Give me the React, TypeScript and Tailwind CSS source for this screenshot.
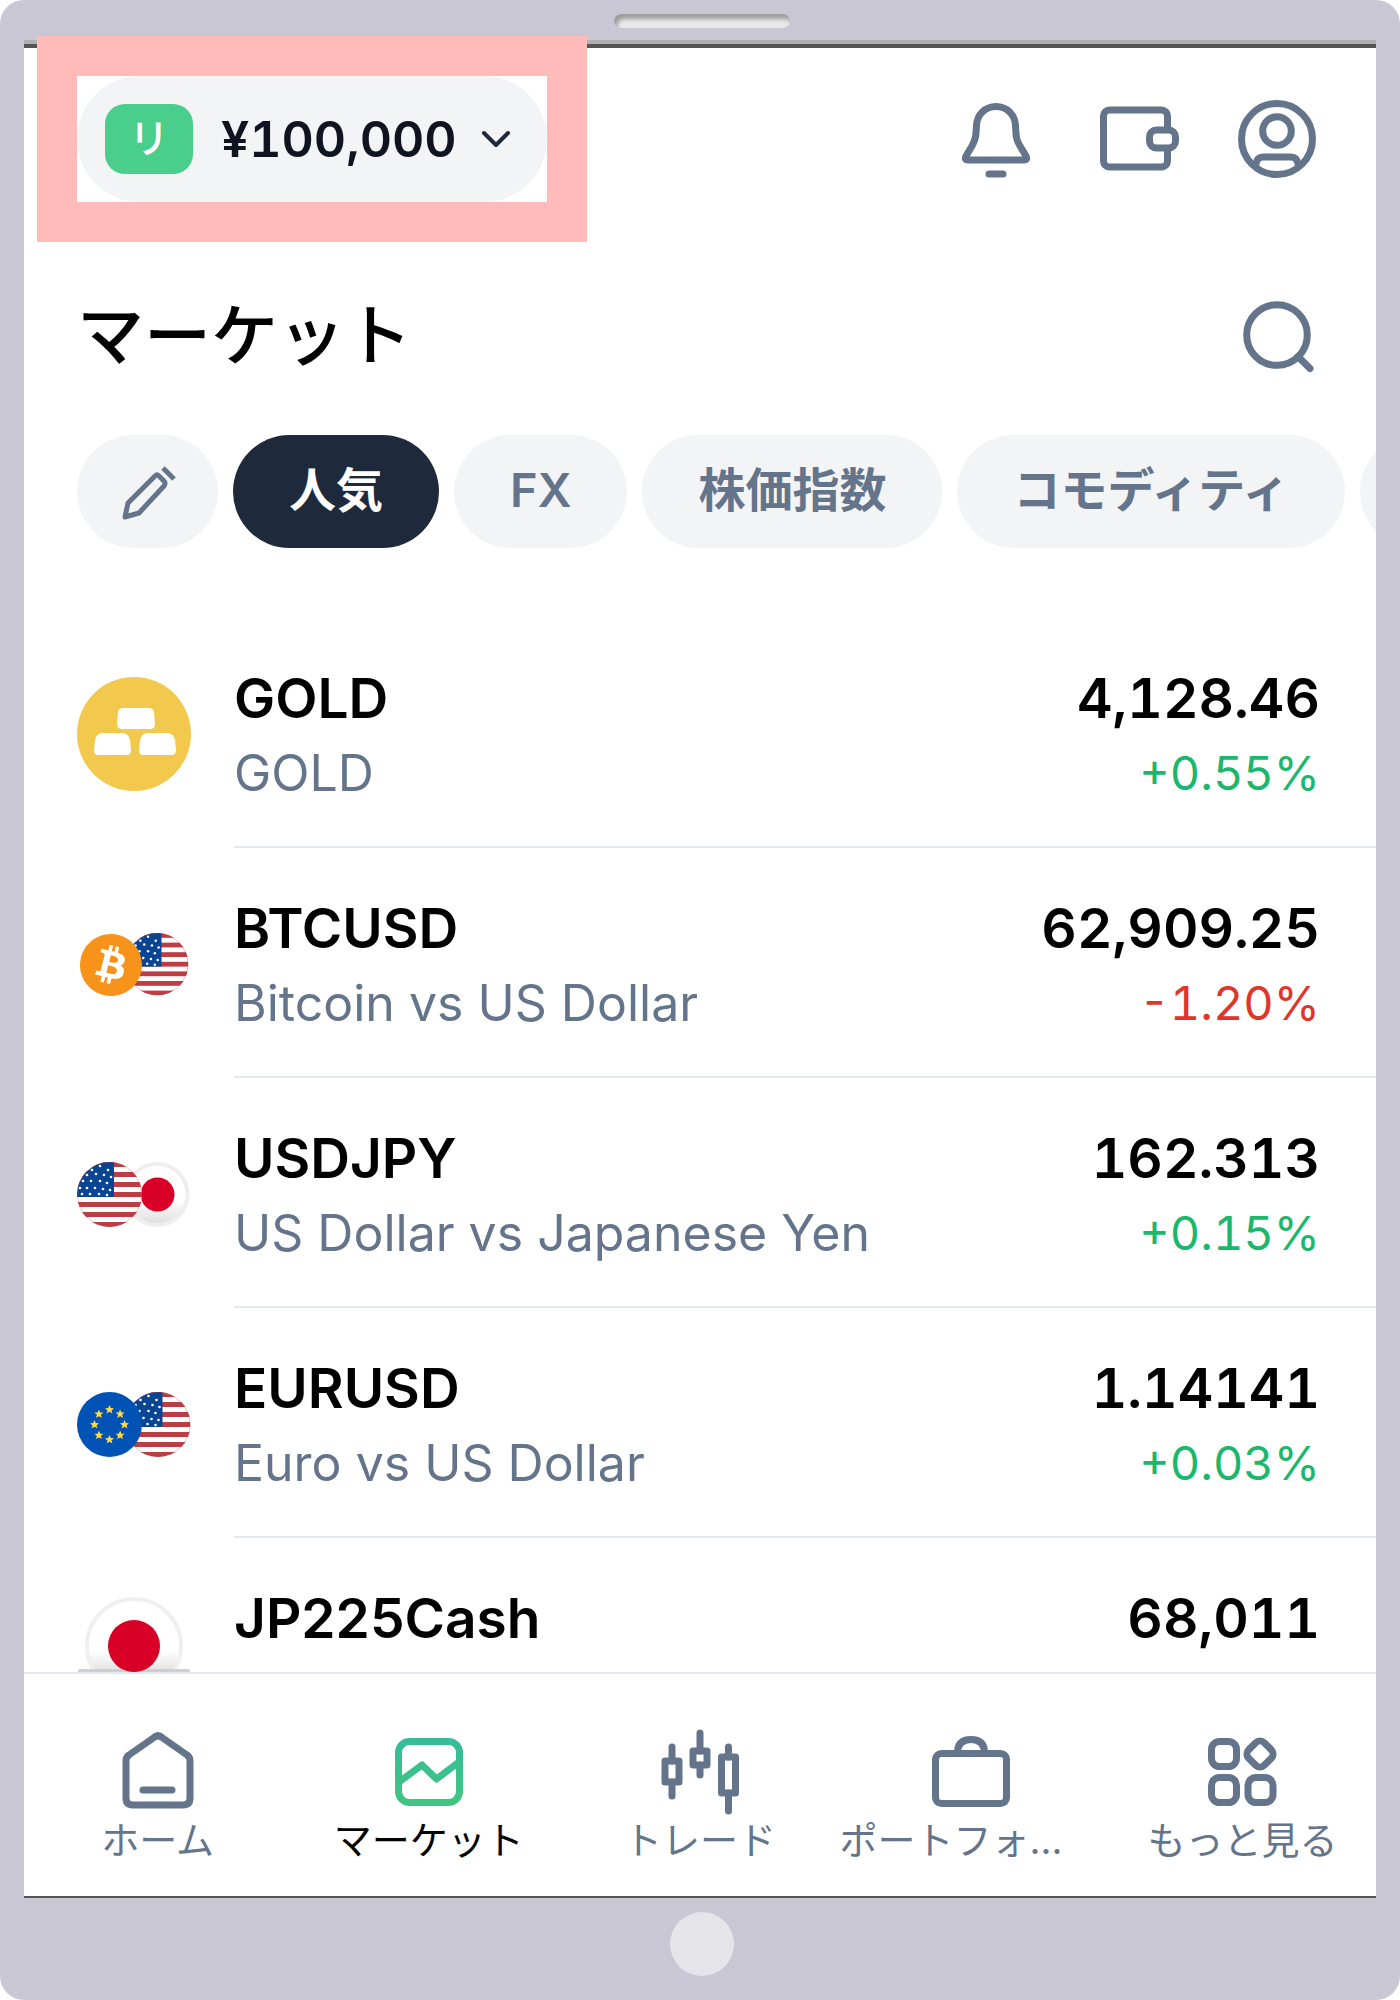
import { useState } from "react";
import type { ReactNode } from "react";
import { SiBitcoin } from "react-icons/si";

const tabs = ["人気", "FX", "株価指数", "コモディティ"];

// x, y of the small white stars on the blue field of the US flag
const stars = [
  [15, 8], [23, 4], [31, 8], [10, 13], [19, 12], [27, 13], [34, 15],
  [6, 19], [14, 19], [23, 19], [30, 21], [3, 26], [10, 26], [18, 26],
  [26, 27], [33, 28], [5, 32], [13, 32], [22, 32], [30, 33],
];

const Icon = ({ children, gradient }: { children: ReactNode; gradient?: boolean }) => (
  <svg
    viewBox="0 0 86 86"
    className="w-[86px] h-[86px] shrink-0"
    fill="none"
    stroke={gradient ? "url(#marketGradient)" : "currentColor"}
    strokeWidth={7}
    strokeLinecap="round"
    strokeLinejoin="round"
    aria-hidden="true"
  >
    {children}
  </svg>
);

const UsFlag = ({ id }: { id: string }) => (
  <g>
    <clipPath id={id}>
      <circle cx="32.5" cy="32.5" r="32.5" />
    </clipPath>
    <g clipPath={`url(#${id})`}>
      <rect width="65" height="65" fill="#fff" />
      {[0, 10, 20, 30, 40, 50, 60].map((y) => (
        <rect key={y} y={y} width="65" height="5" fill="#bd3d44" />
      ))}
      <rect width="37" height="35" fill="#0a4593" />
      {stars.map(([x, y]) => (
        <circle key={`${x}-${y}`} cx={x} cy={y} r="1.3" fill="#fff" />
      ))}
    </g>
    <circle cx="32.5" cy="32.5" r="32" fill="none" stroke="#bd3d44" strokeOpacity="0.3" />
  </g>
);

const EuFlag = () => (
  <g>
    <circle cx="32.5" cy="32.5" r="32.5" fill="#0052b4" />
    {[0, 45, 90, 135, 180, 225, 270, 315].map((a) => (
      <path
        key={a}
        d="M0-4.5L1.3-1.4L4.5-1.3L2 .9L3 4L0 2.3L-3 4L-2 .9L-4.5-1.3L-1.3-1.4Z"
        fill="#ffda44"
        transform={`translate(${32.5 + 15 * Math.sin((a * Math.PI) / 180)} ${
          32.5 - 15 * Math.cos((a * Math.PI) / 180)
        })`}
      />
    ))}
  </g>
);

const GoldIcon = () => (
  <svg viewBox="0 0 114 114" className="w-[114px] h-[114px]" aria-hidden="true">
    <circle cx="57" cy="57" r="57" fill="#f2c94c" />
    <g fill="#fff">
      <path d="M46 31H72Q76 31 77 35L78 47Q78 52 73 52H45Q40 52 40 47L41 35Q42 31 46 31Z" />
      <path d="M25 56H46Q52 57 53 63L54 73Q54 78 50 78H21Q17 78 17 73L18 63Q19 57 25 56Z" />
      <path d="M70 56H91Q97 57 98 63L99 73Q99 78 95 78H66Q62 78 62 73L63 63Q64 57 70 56Z" />
    </g>
  </svg>
);

const BtcUsdIcon = () => (
  <div className="relative w-[114px] h-[65px]">
    <svg viewBox="0 0 114 65" className="w-full h-full" aria-hidden="true">
      <g transform="translate(49 1) scale(0.96)">
        <UsFlag id="usBtc" />
      </g>
      <circle cx="34" cy="32.5" r="30" fill="#fff" />
    </svg>
    <SiBitcoin className="absolute left-[3px] top-[2px] w-[62px] h-[62px] text-[#f7931a]" />
  </div>
);

const UsdJpyIcon = () => (
  <svg viewBox="0 0 114 65" className="w-[114px] h-[65px]" aria-hidden="true">
    <defs>
      <linearGradient id="jpShade" x1="0" y1="0" x2="0" y2="1">
        <stop offset="0.6" stopColor="#fff" />
        <stop offset="1" stopColor="#dcdcdc" />
      </linearGradient>
    </defs>
    <circle cx="80" cy="32.5" r="30.5" fill="url(#jpShade)" stroke="#eceeef" strokeWidth="4" />
    <circle cx="80.5" cy="32.5" r="17" fill="#d80027" />
    <UsFlag id="usJpy" />
  </svg>
);

const EurUsdIcon = () => (
  <svg viewBox="0 0 114 65" className="w-[114px] h-[65px]" aria-hidden="true">
    <g transform="translate(48.5 0)">
      <UsFlag id="usEur" />
    </g>
    <EuFlag />
  </svg>
);

const Jp225Icon = () => (
  <svg viewBox="0 0 114 114" className="w-[114px] h-[114px]" aria-hidden="true">
    <defs>
      <linearGradient id="jpBase" x1="0" y1="0" x2="0" y2="1">
        <stop offset="0.56" stopColor="#fff" />
        <stop offset="0.76" stopColor="#e2e2e2" />
      </linearGradient>
    </defs>
    <circle cx="57" cy="49" r="47" fill="url(#jpBase)" stroke="#eef0f1" strokeWidth="4" />
    <rect x="1" y="72" width="112" height="42" rx="2" fill="#cfcfcf" />
    <circle cx="57" cy="49" r="26" fill="#d80027" />
  </svg>
);

const markets = [
  { icon: <GoldIcon />, symbol: "GOLD", name: "GOLD", price: "4,128.46", change: "+0.55%", up: true },
  { icon: <BtcUsdIcon />, symbol: "BTCUSD", name: "Bitcoin vs US Dollar", price: "62,909.25", change: "-1.20%", up: false },
  { icon: <UsdJpyIcon />, symbol: "USDJPY", name: "US Dollar vs Japanese Yen", price: "162.313", change: "+0.15%", up: true },
  { icon: <EurUsdIcon />, symbol: "EURUSD", name: "Euro vs US Dollar", price: "1.14141", change: "+0.03%", up: true },
  { icon: <Jp225Icon />, symbol: "JP225Cash", name: "", price: "68,011", change: "", up: true },
];

const navItems = [
  {
    label: "ホーム",
    icon: (
      <Icon>
        <path d="M11 32Q11 28 14 26L39 8.5Q43 5 47 8.5L72 26Q75 28 75 32V69Q75 76 68 76H18Q11 76 11 69Z" />
        <path d="M28 61H57" />
      </Icon>
    ),
  },
  {
    label: "マーケット",
    icon: (
      <Icon gradient>
        <defs>
          <linearGradient id="marketGradient" gradientUnits="userSpaceOnUse" x1="0" y1="9" x2="0" y2="77">
            <stop offset="0" stopColor="#36bc9b" />
            <stop offset="1" stopColor="#42c57f" />
          </linearGradient>
        </defs>
        <rect x="12.5" y="12.5" width="61" height="61" rx="11" />
        <path d="M13 53L36 36L50.5 50L73 33" />
      </Icon>
    ),
  },
  {
    label: "トレード",
    icon: (
      <Icon>
        <rect x="8" y="32" width="14" height="21" />
        <path d="M15 18V32M15 53V67" />
        <rect x="36" y="22" width="14" height="14" />
        <path d="M43 4V22M43 36V46" />
        <rect x="64.5" y="28" width="14" height="36" />
        <path d="M71.5 18V28M71.5 64V82" />
      </Icon>
    ),
  },
  {
    label: "ポートフォ...",
    long: true,
    icon: (
      <Icon>
        <rect x="7.5" y="24.5" width="71" height="50" rx="6" />
        <path d="M29.5 24Q29.5 10.5 43 10.5Q56.5 10.5 56.5 24" />
      </Icon>
    ),
  },
  {
    label: "もっと見る",
    icon: (
      <Icon>
        <rect x="12.5" y="12.5" width="25" height="25" rx="8" />
        <rect x="50" y="14" width="22" height="22" rx="6" transform="rotate(45 61 25)" />
        <rect x="12.5" y="48.5" width="25" height="25" rx="8" />
        <rect x="49" y="48.5" width="25" height="25" rx="8" />
      </Icon>
    ),
  },
];

const App = () => {
  const [tab, setTab] = useState("人気");
  const [page, setPage] = useState("マーケット");

  return (
    <div className="h-screen flex flex-col bg-[#c8c7d3] rounded-3xl overflow-hidden font-['Inter','Noto_Sans_CJK_JP',sans-serif]">
      <div className="h-10 shrink-0 flex justify-center pt-[14px] pl-1">
        <div className="w-[176px] h-[14px] rounded-full bg-[#e8e8e8] shadow-[inset_3px_5px_4px_#9c9c9c]" />
      </div>

      <div className="flex-1 min-h-0 mx-6 flex flex-col bg-white border-b-2 border-[#555]">
        <div className="h-1 shrink-0 bg-[#b0b0b0]" />
        <div className="h-1 shrink-0 bg-[#555]" />

        <header className="flex items-center justify-between pt-7 pl-[53px] pr-14">
          <div className="relative">
            <div className="absolute -inset-10 border-[40px] border-[#ffbaba] pointer-events-none" />
            <button
              type="button"
              className="relative flex items-center h-[126px] pl-7 pr-9 rounded-full bg-gray-100 text-[#0f1420] cursor-pointer"
            >
              <span className="flex items-center justify-center w-[88px] h-[70px] mr-7 rounded-[20px] bg-[#4ace8b] text-white text-[40px] leading-none font-medium">
                リ
              </span>
              <span className="text-[50px] leading-none font-semibold tabular-nums">¥100,000</span>
              <svg
                viewBox="0 0 30 18"
                className="w-[30px] h-[18px] ml-6"
                fill="none"
                stroke="#1e293b"
                strokeWidth="4"
                strokeLinecap="round"
                strokeLinejoin="round"
                aria-hidden="true"
              >
                <path d="M3 3L15 15L27 3" />
              </svg>
            </button>
          </div>

          <div className="flex gap-[54px] text-[#64748b]">
            <button type="button" aria-label="通知" className="cursor-pointer">
              <Icon>
                <path d="M42 10.5C31 10.5 23 19 22.5 29C22 42 21 44 18 50L12 60Q10 64 14 64H70Q74 64 72 60L66 50C62.5 44 62 42 61.5 29C61 19 53 10.5 42 10.5Z" />
                <path d="M35 78H49" />
              </Icon>
            </button>
            <button type="button" aria-label="ウォレット" className="cursor-pointer">
              <Icon>
                <rect x="9.5" y="14" width="64" height="57" rx="6" />
                <rect x="55.5" y="34" width="26" height="18" rx="7" fill="#fff" />
              </Icon>
            </button>
            <button type="button" aria-label="アカウント" className="cursor-pointer">
              <Icon>
                <circle cx="43" cy="43" r="35.5" />
                <circle cx="43" cy="35" r="14.3" />
                <path d="M22 68Q23 61 29 61H57Q63 61 64 68" />
              </Icon>
            </button>
          </div>
        </header>

        <div className="flex items-center justify-between mt-[92px] pl-[53px] pr-14">
          <h1 className="pb-1 text-[67px] leading-none font-medium text-black">マーケット</h1>
          <button type="button" aria-label="検索" className="text-[#64748b] cursor-pointer">
            <Icon>
              <circle cx="43" cy="41" r="30.3" />
              <path d="M64 62.5L76 74.5" />
            </Icon>
          </button>
        </div>

        <div className="flex gap-[15px] mt-[55px] pl-[53px] overflow-hidden shrink-0">
          <button
            type="button"
            aria-label="編集"
            className="flex items-center justify-center shrink-0 w-[141px] h-[113px] rounded-full bg-gray-100 text-[#64748b] cursor-pointer"
          >
            <svg
              viewBox="0 0 56 56"
              className="w-14 h-14"
              fill="none"
              stroke="currentColor"
              strokeWidth="5"
              strokeLinejoin="round"
              aria-hidden="true"
            >
              <path d="M5 53L8 39L35 12Q37 10 39 12L44 17Q46 19 44 22L19 49Z" />
              <path d="M43 4L54 15" />
            </svg>
          </button>
          {tabs.map((t) => (
            <button
              key={t}
              type="button"
              onClick={() => setTab(t)}
              className={`shrink-0 h-[113px] px-14 pb-1 rounded-full text-[47px] leading-none font-semibold whitespace-nowrap cursor-pointer ${
                tab === t ? "bg-[#1e293b] text-white" : "bg-gray-100 text-[#64748b]"
              }`}
            >
              {t}
            </button>
          ))}
          <button
            type="button"
            aria-label="その他"
            className="shrink-0 w-40 h-[113px] rounded-full bg-gray-100 cursor-pointer"
          />
        </div>

        <ul className="flex-1 min-h-0 mt-[70px] overflow-hidden">
          {markets.map((m) => (
            <li key={m.symbol} className="flex h-[230px] pl-[53px]">
              <div className="flex items-center w-[114px] h-[150px] mt-[41px] mr-[43px] shrink-0">{m.icon}</div>
              <div className="flex-1 flex justify-between pt-[41px] pr-14 border-b-2 border-slate-200">
                <div>
                  <p className="text-[55px] leading-[78px] font-semibold text-black">{m.symbol}</p>
                  <p className="text-[50px] leading-[72px] text-[#64748b]">{m.name}</p>
                </div>
                <div className="text-right tabular-nums">
                  <p className="text-[55px] leading-[78px] font-semibold text-black">{m.price}</p>
                  <p className={`text-[47px] leading-[72px] ${m.up ? "text-[#1ab76c]" : "text-[#e0352b]"}`}>
                    {m.change}
                  </p>
                </div>
              </div>
            </li>
          ))}
        </ul>

        <nav className="shrink-0 h-[224px] border-t-2 border-slate-200">
          <div className="grid grid-cols-5 -mx-0.5 pt-[55px]">
            {navItems.map((n) => (
              <a
                key={n.label}
                href="#"
                onClick={() => setPage(n.label)}
                className="flex flex-col items-center px-1 text-[#64748b]"
              >
                {n.icon}
                <span
                  className={`text-[38px] leading-[50px] whitespace-nowrap ${n.long ? "self-start" : ""} ${
                    page === n.label ? "text-black" : ""
                  }`}
                >
                  {n.label}
                </span>
              </a>
            ))}
          </div>
        </nav>
      </div>

      <div className="h-[102px] shrink-0 flex justify-center pt-[14px] pl-1">
        <button type="button" aria-label="ホームボタン" className="w-16 h-16 rounded-full bg-[#e4e4e9] cursor-pointer" />
      </div>
    </div>
  );
};

export default App;
